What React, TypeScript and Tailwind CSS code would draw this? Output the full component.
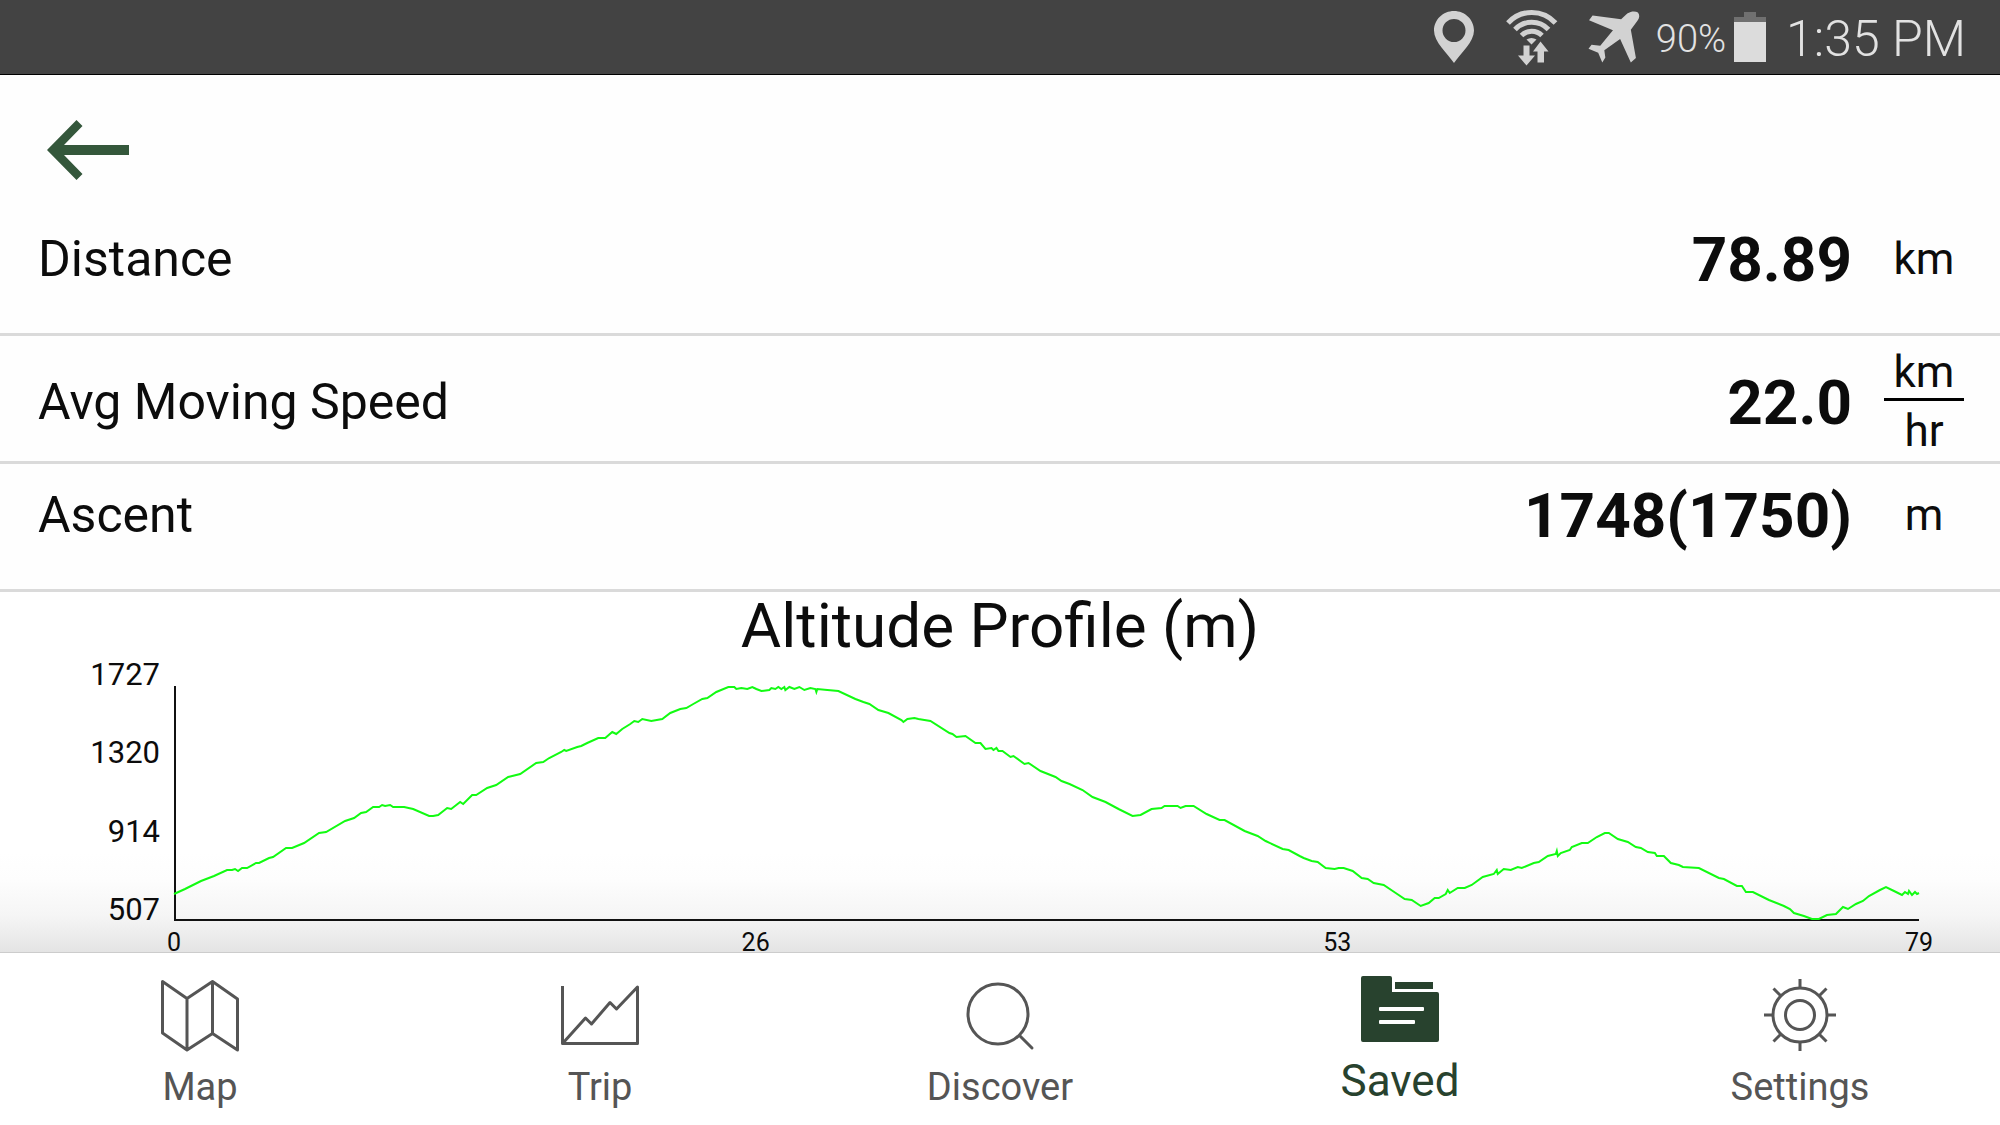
import type { ReactNode } from "react";

const ALTITUDE: [number, number][] = [
  [0, 208], [11, 203], [27, 195], [40, 190], [53, 184], [58, 184], [61, 183], [64, 185], [68, 182], [73, 182],
  [82, 177], [85, 177], [95, 172], [99, 171], [112, 162], [118, 162], [130, 157], [145, 147], [152, 146],
  [171, 135], [180, 132], [187, 127], [192, 126], [199, 121], [205, 121], [208, 119], [211, 120], [216, 119],
  [219, 121], [230, 121], [239, 123], [255, 130], [259, 130], [264, 129], [273, 122], [277, 123], [286, 116],
  [289, 118], [298, 109], [302, 109], [313, 102], [322, 99], [334, 91], [346, 88], [362, 77], [369, 76],
  [375, 72], [387, 66], [390, 64], [392, 65], [403, 61], [407, 60], [413, 57], [424, 52], [431, 52], [438, 46],
  [442, 48], [448, 43], [456, 38], [460, 35], [464, 36], [468, 33], [477, 35], [488, 33], [496, 27], [506, 23],
  [512, 22], [519, 18], [528, 13], [533, 12], [542, 6], [554, 1], [560, 1], [562, 3], [567, 2], [573, 3],
  [578, 1], [582, 3], [587, 5], [595, 4], [597, 2], [601, 3], [604, 1], [607, 3], [610, 1], [611, 4], [615, 1],
  [620, 3], [625, 1], [630, 4], [636, 2], [641, 3], [642, 6], [643, 3], [653, 4], [664, 5], [681, 13],
  [689, 16], [695, 18], [704, 24], [714, 27], [727, 34], [729, 36], [733, 33], [740, 32], [744, 33], [750, 34],
  [756, 35], [775, 47], [778, 48], [782, 51], [791, 50], [801, 57], [806, 57], [811, 63], [817, 62], [819, 64],
  [822, 62], [824, 65], [828, 65], [836, 71], [839, 70], [850, 78], [854, 77], [866, 85], [881, 91], [887, 95],
  [895, 98], [908, 104], [918, 111], [931, 116], [944, 123], [958, 130], [966, 129], [977, 123], [987, 122],
  [990, 120], [1003, 120], [1006, 122], [1011, 120], [1019, 120], [1032, 128], [1045, 134], [1050, 134],
  [1070, 145], [1083, 150], [1091, 155], [1108, 163], [1114, 164], [1125, 170], [1129, 172], [1137, 175],
  [1143, 176], [1151, 182], [1160, 183], [1164, 182], [1169, 182], [1178, 185], [1187, 192], [1193, 193],
  [1199, 197], [1209, 199], [1221, 207], [1230, 213], [1237, 214], [1246, 220], [1254, 217], [1260, 212],
  [1264, 212], [1271, 208], [1273, 204], [1275, 207], [1283, 202], [1290, 202], [1297, 199], [1308, 191],
  [1319, 188], [1322, 184], [1323, 188], [1329, 183], [1336, 184], [1343, 181], [1347, 182], [1359, 177],
  [1364, 176], [1373, 170], [1381, 168], [1382, 165], [1383, 170], [1386, 167], [1395, 164], [1397, 161],
  [1407, 157], [1413, 157], [1422, 151], [1430, 147], [1434, 147], [1443, 153], [1453, 156], [1461, 161],
  [1466, 162], [1473, 166], [1480, 167], [1482, 170], [1489, 170], [1496, 177], [1504, 179], [1508, 181],
  [1524, 182], [1544, 192], [1549, 193], [1562, 200], [1567, 200], [1571, 206], [1578, 206], [1594, 214],
  [1609, 220], [1615, 223], [1619, 227], [1629, 230], [1637, 233], [1644, 233], [1652, 229], [1661, 228],
  [1668, 221], [1673, 223], [1681, 218], [1688, 215], [1694, 210], [1705, 204], [1711, 201], [1719, 205],
  [1727, 209], [1730, 206], [1733, 208], [1734, 205], [1737, 209], [1740, 206], [1742, 208], [1744, 207],
];

function StatusBar() {
  return (
    <header className="flex h-[75px] shrink-0 items-center justify-end border-b border-black bg-[#434343] pr-[34px] text-[#e2e2e2]">
      <svg className="h-[52px] w-10" viewBox="0 0 40 52" fill="#d2d2d2" role="img" aria-label="Location on">
        <path
          fillRule="evenodd"
          d="M20 0C9 0 0 8.700 0 19.500C0 31 13 42 20 52C27 42 40 31 40 19.500C40 8.700 31 0 20 0ZM20 8A11.500 11.500 0 1 1 20 31A11.500 11.500 0 1 1 20 8Z"
        />
      </svg>
      <svg className="ml-8 h-[58px] w-[52px]" viewBox="0 0 52 58" fill="#d2d2d2" role="img" aria-label="Wi-Fi active">
        <g fill="none" stroke="#d2d2d2" strokeWidth="5">
          <path d="M2 15A32 32 0 0 1 49.500 15" />
          <path d="M9 21.500A23 23 0 0 1 42.500 21.500" />
          <path d="M15.500 27.500A14.500 14.500 0 0 1 36 27.500" />
        </g>
        <path d="M20.500 31.500Q25.500 28.500 30.500 31.500L25.500 36.500Z" />
        <path d="M17.500 37.500H23.500V47.500H29L20.500 57.500L12 47.500H17.500Z" />
        <path d="M34.500 33.500L42.500 43.500H38V54.500H31.500V43.500H27Z" />
      </svg>
      <svg className="ml-[30px] h-[52px] w-[52px]" viewBox="0 0 50 51" fill="#d2d2d2" role="img" aria-label="Airplane mode">
        <path d="M32 8L38 2.500C42 0 46 0 48.500 1.500C50.500 4 50 7 48 9.500L41.500 18.500L46.500 46L41.500 50.500L31 27.500L15.500 38.500L16.500 45.500L13.500 50.500L9.500 41L0 37L3 33L11.500 34L24 19L0.500 9L4 4.500Z" />
      </svg>
      <span className="ml-4 pt-1 text-[38px] leading-10 font-light">90%</span>
      <svg className="ml-2 h-[52px] w-8" viewBox="0 0 32 52" role="img" aria-label="Battery">
        <path d="M10 1H22V6H32V12H0V6H10Z" fill="#707070" />
        <rect y="11" width="32" height="40" fill="#dcdcdc" />
      </svg>
      <span className="ml-5 pt-1 text-[50px] leading-[56px] font-light">1:35 PM</span>
    </header>
  );
}

function StatRow({ label, value, unit, per }: { label: string; value: string; unit: string; per?: string }) {
  return (
    <div
      className={`flex min-h-32 items-center border-b-[3px] border-[#dadada] pr-9 pl-[38px] ${per ? "pt-[6px]" : "pb-6"}`}
    >
      <dt className="flex-1 text-[50px] leading-[60px]">{label}</dt>
      <dd className="flex items-center">
        <span className="pt-[2px] text-[62px] leading-[72px] font-bold">{value}</span>
        <span className="ml-8 flex w-20 flex-col items-center text-[44px] leading-[52px]">
          <span>{unit}</span>
          {per && <span className="w-full border-t-[3px] border-black pt-1 text-center">{per}</span>}
        </span>
      </dd>
    </div>
  );
}

function AltitudeChart() {
  return (
    <section className="flex-1 bg-[linear-gradient(to_top,#e4e4e4_0px,#f5f5f5_36px,#fdfdfd_72px,#ffffff_100px)]">
      <h2 className="text-center text-[62px] leading-[67px]">Altitude Profile (m)</h2>
      <div className="grid grid-cols-[174px_1fr] pr-[81px]">
        <div className="flex h-[267px] flex-col justify-between pr-[14px] text-right text-[31px] leading-8">
          {["1727", "1320", "914", "507"].map((t) => (
            <span key={t}>{t}</span>
          ))}
        </div>
        <svg
          className="mt-[27px] h-[235px] w-full overflow-visible"
          viewBox="0 0 1744 235"
          preserveAspectRatio="none"
          fill="none"
          role="img"
          aria-label="Altitude in metres over distance in kilometres"
        >
          <path d="M1 0V234H1744" stroke="#111111" strokeWidth="2" vectorEffect="non-scaling-stroke" />
          <polyline
            points={ALTITUDE.map((p) => p.join(",")).join(" ")}
            stroke="#12fb12"
            strokeWidth="2"
            vectorEffect="non-scaling-stroke"
          />
        </svg>
        <div className="col-start-2 mt-2 flex justify-between text-[25px] leading-[18px]">
          {["0", "26", "53", "79"].map((t) => (
            <span key={t} className="flex w-0 justify-center">
              {t}
            </span>
          ))}
        </div>
      </div>
    </section>
  );
}

const stroke = { fill: "none", stroke: "currentColor", strokeWidth: 3, strokeLinejoin: "round" as const };

const TABS: { label: string; active?: boolean; icon: ReactNode }[] = [
  {
    label: "Map",
    icon: (
      <path {...stroke} d="M2.500 5.500L27 22.500L52.500 5.500L77.500 23V74L52.500 57.500L27 74L2.500 57ZM27 22.500V74M52.500 5.500V57.500" />
    ),
  },
  {
    label: "Trip",
    icon: <path {...stroke} d="M2.500 10V67.500H77.500V11L56.500 33L50 26.500L31.500 48L25.500 42L3 67" />,
  },
  {
    label: "Discover",
    icon: (
      <g {...stroke} strokeLinecap="round">
        <circle cx="38" cy="38" r="30" />
        <path d="M59.500 59.500L72 72" />
      </g>
    ),
  },
  {
    label: "Saved",
    active: true,
    icon: (
      <g fill="currentColor">
        <path d="M3 0H30Q32 0 32 2V16H77Q79 16 79 18V64Q79 66 77 66H3Q1 66 1 64V2Q1 0 3 0Z" />
        <rect x="35" y="6" width="38" height="7" />
        <g fill="#ffffff">
          <rect x="19" y="31" width="45" height="4" rx="1" />
          <rect x="19" y="44" width="36" height="4" rx="1" />
        </g>
      </g>
    ),
  },
  {
    label: "Settings",
    icon: (
      <g {...stroke}>
        <circle cx="40" cy="39" r="27" />
        <circle cx="40" cy="39" r="14.500" />
        <path d="M40 12V3M40 66V75M13 39H4M67 39H76M21 20L13.500 12.500M59 20L66.500 12.500M21 58L13.500 65.500M59 58L66.500 65.500" />
      </g>
    ),
  },
];

function TabBar() {
  return (
    <nav className="grid h-[173px] shrink-0 grid-cols-5 border-t border-[#cccccc] bg-white">
      {TABS.map((tab) => (
        <button
          key={tab.label}
          type="button"
          aria-current={tab.active ? "page" : undefined}
          className={`flex flex-col items-center pt-[23px] ${tab.active ? "text-[#28422e]" : "text-[#555555]"}`}
        >
          <svg className="h-[76px] w-20 shrink-0" viewBox="0 0 80 76" aria-hidden="true">
            {tab.icon}
          </svg>
          <span className={tab.active ? "mt-1 text-[44px] leading-[50px]" : "mt-3 text-[38px] leading-[46px]"}>
            {tab.label}
          </span>
        </button>
      ))}
    </nav>
  );
}

export default function App() {
  return (
    <div className="flex min-h-screen flex-col bg-[#fefefe] font-[Roboto,sans-serif] text-[#0c0c0c]">
      <StatusBar />
      <main className="flex flex-1 flex-col">
        <div className="flex h-[133px] items-center px-[47px] pt-4">
          <button type="button" aria-label="Back">
            <svg className="h-[60px] w-[82px]" viewBox="0 0 82 60" fill="#34573b" aria-hidden="true">
              <path d="M0 30L29.500 0L35.500 6L17 25H82V35H17L35.500 54L29.500 60Z" />
            </svg>
          </button>
        </div>
        <dl>
          <StatRow label="Distance" value="78.89" unit="km" />
          <StatRow label="Avg Moving Speed" value="22.0" unit="km" per="hr" />
          <StatRow label="Ascent" value="1748(1750)" unit="m" />
        </dl>
        <AltitudeChart />
      </main>
      <TabBar />
    </div>
  );
}
